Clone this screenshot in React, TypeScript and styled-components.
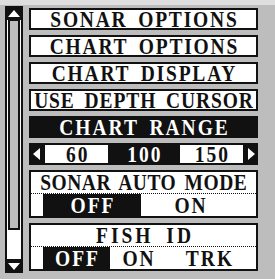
import React from 'react';
import styled, { createGlobalStyle } from 'styled-components';

const GlobalStyle = createGlobalStyle`
  body {
    margin: 0;
    background: #bdbdbd;
  }
`;

const Screen = styled.div`
  width: 275px;
  height: 279px;
  box-sizing: border-box;
  background: #bdbdbd;
  border-top: 5px solid #dedede;
  padding: 1px 0 0 5px;
  display: flex;
  gap: 6px;
  font-family: 'Liberation Serif', 'DejaVu Serif', serif;
  font-weight: bold;
  overflow: hidden;
`;

const ScrollBar = styled.div`
  width: 18px;
  height: 267px;
  display: flex;
  flex-direction: column;
  background: #111;
`;

const ScrollCap = styled.div`
  height: 14px;
  display: flex;
  align-items: center;
  justify-content: center;
`;

const Track = styled.div`
  flex: 1;
  margin: 0 2px;
  background: #fff;
  padding: 0 1px;
  display: flex;
  flex-direction: column;
`;

const Thumb = styled.div`
  height: 207px;
  border: 2px solid #111;
  border-top-width: 1px;
  background: #bdbdbd;
`;

const Menu = styled.div`
  width: 229px;
  padding-top: 2px;
  display: flex;
  flex-direction: column;
  gap: 5px;
`;

const Item = styled.div<{ $dark?: boolean }>`
  height: 22px;
  box-sizing: border-box;
  border: 2px solid #111;
  background: ${(p) => (p.$dark ? '#111' : '#fff')};
  color: ${(p) => (p.$dark ? '#fff' : '#111')};
  display: flex;
  align-items: center;
  justify-content: center;
`;

const Label = styled.span<{ $sp?: number; $ws?: number }>`
  display: inline-block;
  font-size: 19.5px;
  line-height: 16px;
  letter-spacing: ${(p) => p.$sp ?? 2}px;
  word-spacing: ${(p) => p.$ws ?? 2}px;
  margin-right: -${(p) => p.$sp ?? 2}px;
  white-space: nowrap;
  padding-top: 1px;
  transform: scaleY(1.14);
`;

const RangeRow = styled.div`
  height: 22px;
  display: flex;
  background: #111;
`;

const ArrowBox = styled.div<{ $w: number }>`
  width: ${(p) => p.$w}px;
  display: flex;
  align-items: center;
  justify-content: center;
`;

const RangeCell = styled.div<{ $on?: boolean }>`
  flex: 1;
  box-sizing: border-box;
  border: 2px solid #111;
  background: ${(p) => (p.$on ? '#111' : '#fff')};
  color: ${(p) => (p.$on ? '#fff' : '#111')};
  display: flex;
  align-items: center;
  justify-content: center;
`;

const Group = styled.div`
  height: 48px;
  box-sizing: border-box;
  border: 2px solid #111;
  background: #fff;
  display: flex;
  flex-direction: column;
`;

const GroupTitle = styled.div`
  height: 22px;
  box-sizing: border-box;
  display: flex;
  align-items: center;
  justify-content: center;
  border-bottom: 1px dotted #111;
  color: #111;
`;

const Options = styled.div<{ $cols: string }>`
  flex: 1;
  display: grid;
  grid-template-columns: 12px ${(p) => p.$cols};
`;

const Option = styled.div<{ $on?: boolean }>`
  background: ${(p) => (p.$on ? '#111' : '#fff')};
  color: ${(p) => (p.$on ? '#fff' : '#111')};
  display: flex;
  align-items: center;
  justify-content: center;
`;

const Tri = ({ dir }: { dir: 'up' | 'down' | 'left' | 'right' }) => {
  const pts = {
    up: '0,7 6,0 12,7',
    down: '0,0 12,0 6,7',
    left: '7,0 7,12 0,6',
    right: '0,0 0,12 7,6',
  }[dir];
  const horiz = dir === 'left' || dir === 'right';
  return (
    <svg width={horiz ? 7 : 12} height={horiz ? 12 : 7} viewBox={horiz ? '0 0 7 12' : '0 0 12 7'}>
      <polygon points={pts} fill="#fff" />
    </svg>
  );
};

const menuItems = ['SONAR OPTIONS', 'CHART OPTIONS', 'CHART DISPLAY', 'USE DEPTH CURSOR'];

export default function App() {
  return (
    <>
      <GlobalStyle />
      <Screen>
        <ScrollBar>
          <ScrollCap>
            <Tri dir="up" />
          </ScrollCap>
          <Track>
            <Thumb />
          </Track>
          <ScrollCap>
            <Tri dir="down" />
          </ScrollCap>
        </ScrollBar>
        <Menu>
          {menuItems.map((m) =>
            m.length > 14 ? (
              <Item key={m}>
                <Label $sp={0.9} $ws={4}>
                  {m}
                </Label>
              </Item>
            ) : (
              <Item key={m}>
                <Label $sp={1.8} $ws={4}>
                  {m}
                </Label>
              </Item>
            )
          )}
          <Item $dark>
            <Label $ws={4}>CHART RANGE</Label>
          </Item>
          <RangeRow>
            <ArrowBox $w={14}>
              <Tri dir="left" />
            </ArrowBox>
            <RangeCell>
              <Label>60</Label>
            </RangeCell>
            <RangeCell $on>
              <Label>100</Label>
            </RangeCell>
            <RangeCell>
              <Label>150</Label>
            </RangeCell>
            <ArrowBox $w={13}>
              <Tri dir="right" />
            </ArrowBox>
          </RangeRow>
          <Group>
            <GroupTitle>
              <Label $sp={0.5} $ws={3}>
                SONAR AUTO MODE
              </Label>
            </GroupTitle>
            <Options $cols="98px 98px">
              <span />
              <Option $on>
                <Label>OFF</Label>
              </Option>
              <Option>
                <Label>ON</Label>
              </Option>
            </Options>
          </Group>
          <Group>
            <GroupTitle>
              <Label $sp={3} $ws={5}>
                FISH ID
              </Label>
            </GroupTitle>
            <Options $cols="67px 56px 86px">
              <span />
              <Option $on>
                <Label>OFF</Label>
              </Option>
              <Option>
                <Label>ON</Label>
              </Option>
              <Option>
                <Label>TRK</Label>
              </Option>
            </Options>
          </Group>
        </Menu>
      </Screen>
    </>
  );
}
